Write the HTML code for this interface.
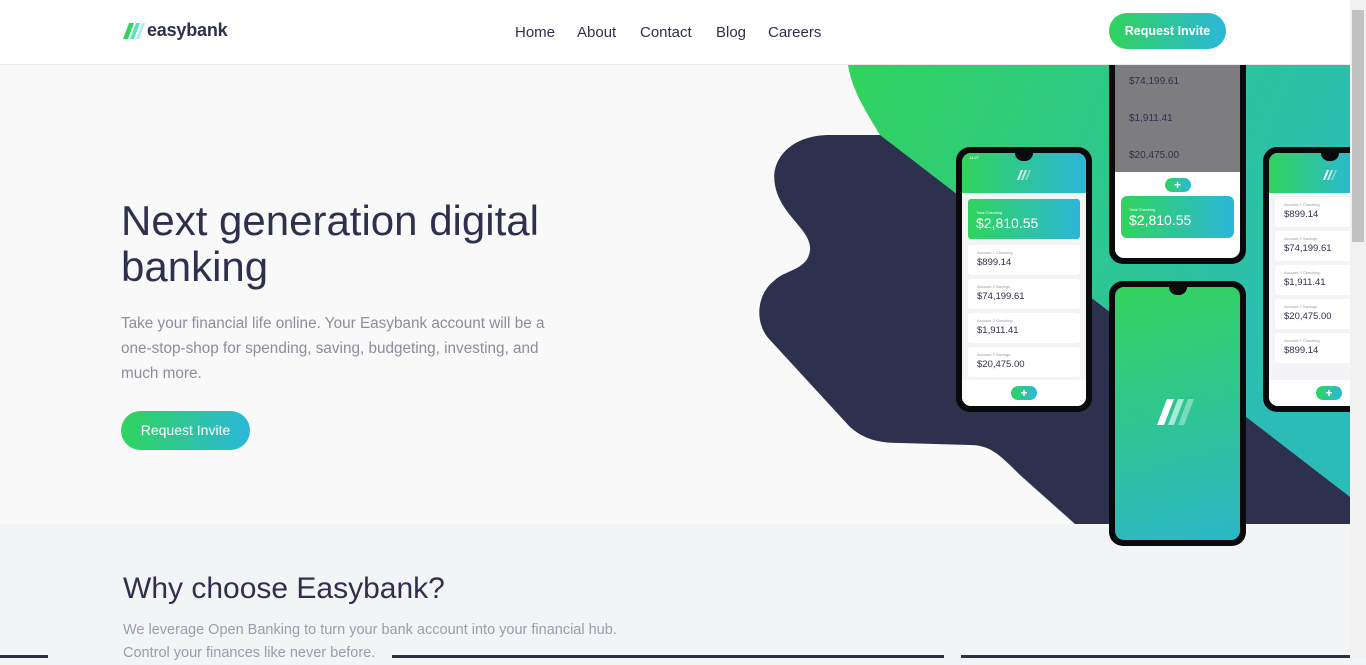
<!DOCTYPE html>
<html><head><style>
*{margin:0;padding:0;box-sizing:border-box}
body{width:1366px;height:658px;overflow:hidden;background:#f3f4f6;font-family:"Liberation Sans",sans-serif;position:relative}
header{position:absolute;left:0;top:0;width:1350px;height:65px;background:#fff;border-bottom:1px solid #e8e8ea;z-index:5}
.logo{position:absolute;left:147px;top:20px;font-weight:bold;font-size:18px;color:#2d314d;letter-spacing:-.2px}
nav span{position:absolute;top:24px;font-size:15px;color:#2d314d}
.btn{position:absolute;background:linear-gradient(90deg,#31d35c,#2bb7da);color:#fff;font-weight:bold;border-radius:20px;text-align:center}
.hero{position:absolute;left:0;top:65px;width:1350px;height:459px;background:#f9f9fa;overflow:hidden}
h1{position:absolute;left:121px;font-weight:normal;font-size:42px;line-height:46px;color:#2d314d}
.p{position:absolute;left:121px;font-size:15.3px;line-height:25px;color:#8a8d9c;width:440px}
.phone{position:absolute;background:#0a0a0c;border-radius:14px;padding:6px;overflow:hidden}
.scr{background:#f4f4f6;border-radius:9px;width:100%;height:100%;overflow:hidden;position:relative}
.top{height:40px;background:linear-gradient(90deg,#31d35c,#2bb7da);position:relative}
.notch{position:absolute;left:50%;margin-left:-9px;top:0;width:18px;height:8px;background:#0a0a0c;border-radius:0 0 9px 9px}
.st{position:absolute;top:2px;left:7px;font-size:4px;color:#fff}
.lg{position:absolute;left:50%;margin-left:-7px;top:17px}
.card{background:#fff;margin:4px 6px;height:30px;border-radius:3px;padding:5px 9px;font-size:9.5px;color:#2d314d}
.card small{display:block;font-size:4px;color:#999;margin-bottom:2px}
.tot{margin:6px 6px;height:40px;border-radius:3px;background:linear-gradient(90deg,#31d35c,#2bb7da);color:#fff;padding:11px 8px;font-size:14px}
.plus{position:absolute;left:50%;margin-left:-13px;width:26px;height:14px;border-radius:7px;background:linear-gradient(90deg,#31d35c,#2bb7da);color:#fff;font-size:12px;font-weight:bold;text-align:center;line-height:14px}
.sb{position:absolute;left:1350px;top:0;width:16px;height:658px;background:#f1f1f1}
</style></head><body>
<header>
<svg style="position:absolute;left:123px;top:23px" width="22" height="16"><polygon points="0,16 6,0 11,0 5,16" fill="#33d35e"/><polygon points="7,16 13,0 17,0 11,16" fill="#5fe0c0"/><polygon points="13,16 19,0 22,0 16,16" fill="#b0ece8"/></svg>
<div class="logo">easybank</div>
<nav><span style="left:515px">Home</span><span style="left:577px">About</span><span style="left:640px">Contact</span><span style="left:716px">Blog</span><span style="left:768px">Careers</span></nav>
<div class="btn" style="left:1109px;top:13px;width:117px;height:36px;line-height:36px;font-size:12.5px">Request Invite</div>
</header>
<div class="hero">
<svg style="position:absolute;left:0;top:0" width="1350" height="459">
<defs><linearGradient id="g" x1="0" y1="0" x2="1" y2="0.4"><stop offset="0" stop-color="#31d35c"/><stop offset="1" stop-color="#2bbcb8"/></linearGradient></defs>
<path d="M848,0 L1350,0 L1350,459 L1100,459 L880,70 C865,45 852,25 848,0 Z" fill="url(#g)"/>
<path d="M880,70 L830,70 C790,70 770,95 775,120 C780,150 812,165 810,185 C808,205 785,205 775,215 C755,230 755,260 770,275 L850,362 C865,375 880,378 900,378 L970,380 C990,380 1000,390 1020,410 L1075,459 L1350,459 L1350,432 Z" fill="#2d314d"/>
</svg>
<h1 style="top:133px">Next generation digital<br>banking</h1>
<div class="p" style="top:246px">Take your financial life online. Your Easybank account will be a one-stop-shop for spending, saving, budgeting, investing, and much more.</div>
<div class="btn" style="left:121px;top:346px;width:129px;height:39px;line-height:39px;font-size:14px;font-weight:normal">Request Invite</div>
</div>
<div class="phone" style="left:956px;top:147px;width:136px;height:265px"><div class="scr"><div class="top"><div class="notch"></div><span class="st">14:27</span><svg class="lg" width="14" height="10"><polygon points="0,10 4,0 6,0 2,10" fill="#fff"/><polygon points="4,10 8,0 10,0 6,10" fill="#fff" opacity=".7"/><polygon points="8,10 12,0 14,0 10,10" fill="#fff" opacity=".4"/></svg></div>
<div class="tot"><small style="display:block;font-size:4px">Total Checking</small>$2,810.55</div>
<div class="card"><small>Account 1 Checking</small>$899.14</div><div class="card"><small>Account 2 Savings</small>$74,199.61</div><div class="card"><small>Account 3 Checking</small>$1,911.41</div><div class="card"><small>Account 2 Savings</small>$20,475.00</div>
<div style="position:absolute;left:0;bottom:0;width:100%;height:26px;background:#fff"><div class="plus" style="top:6px">+</div></div></div></div>
<div class="phone" style="left:1109px;top:40px;width:137px;height:224px"><div class="scr" style="background:#fff"><div style="height:126px;background:#7d7d80;padding:30px 14px;font-size:10px;color:#2d314d"><div style="margin-bottom:26px">$74,199.61</div><div style="margin-bottom:26px">$1,911.41</div><div>$20,475.00</div></div>
<div class="plus" style="top:132px">+</div><div class="tot" style="margin:24px 6px;height:42px;border-radius:6px"><small style="display:block;font-size:4px">Total Checking</small>$2,810.55</div></div></div>
<div class="phone" style="left:1109px;top:281px;width:137px;height:265px"><div class="scr" style="background:linear-gradient(165deg,#33d35c,#2bb7c8)"><div class="notch"></div>
<svg style="position:absolute;left:42px;top:112px" width="40" height="26"><polygon points="0,26 10,0 17,0 7,26" fill="#fff"/><polygon points="11,26 21,0 27,0 17,26" fill="#c5f2e8" opacity=".8"/><polygon points="21,26 31,0 37,0 27,26" fill="#c5f2e8" opacity=".5"/></svg></div></div>
<div class="phone" style="left:1263px;top:147px;width:100px;height:265px"><div class="scr"><div class="top"><div class="notch" style="left:61px"></div><svg class="lg" style="left:61px" width="14" height="10"><polygon points="0,10 4,0 6,0 2,10" fill="#fff"/><polygon points="4,10 8,0 10,0 6,10" fill="#fff" opacity=".7"/><polygon points="8,10 12,0 14,0 10,10" fill="#fff" opacity=".4"/></svg></div>
<div class="card" style="margin-top:4px"><small>Account 1 Checking</small>$899.14</div><div class="card"><small>Account 2 Savings</small>$74,199.61</div><div class="card"><small>Account 3 Checking</small>$1,911.41</div><div class="card"><small>Account 2 Savings</small>$20,475.00</div><div class="card"><small>Account 1 Checking</small>$899.14</div>
<div style="position:absolute;left:0;bottom:0;width:100%;height:26px;background:#fff"><div class="plus" style="top:6px;left:60px">+</div></div></div></div>
<div style="position:absolute;left:123px;top:572px;font-size:30px;color:#2d314d">Why choose Easybank?</div>
<div style="position:absolute;left:123px;top:619px;font-size:14.5px;line-height:23px;color:#9a9daa">We leverage Open Banking to turn your bank account into your financial hub.<br>Control your finances like never before.</div>
<div style="position:absolute;left:0;top:655px;width:48px;height:3px;background:#2d3340"></div>
<div style="position:absolute;left:392px;top:655px;width:552px;height:3px;background:#2d3340"></div>
<div style="position:absolute;left:961px;top:655px;width:389px;height:3px;background:#2d3340"></div>
<div class="sb"><div style="position:absolute;left:2px;top:10px;width:12px;height:232px;background:#c1c1c1"></div></div>
</body></html>
